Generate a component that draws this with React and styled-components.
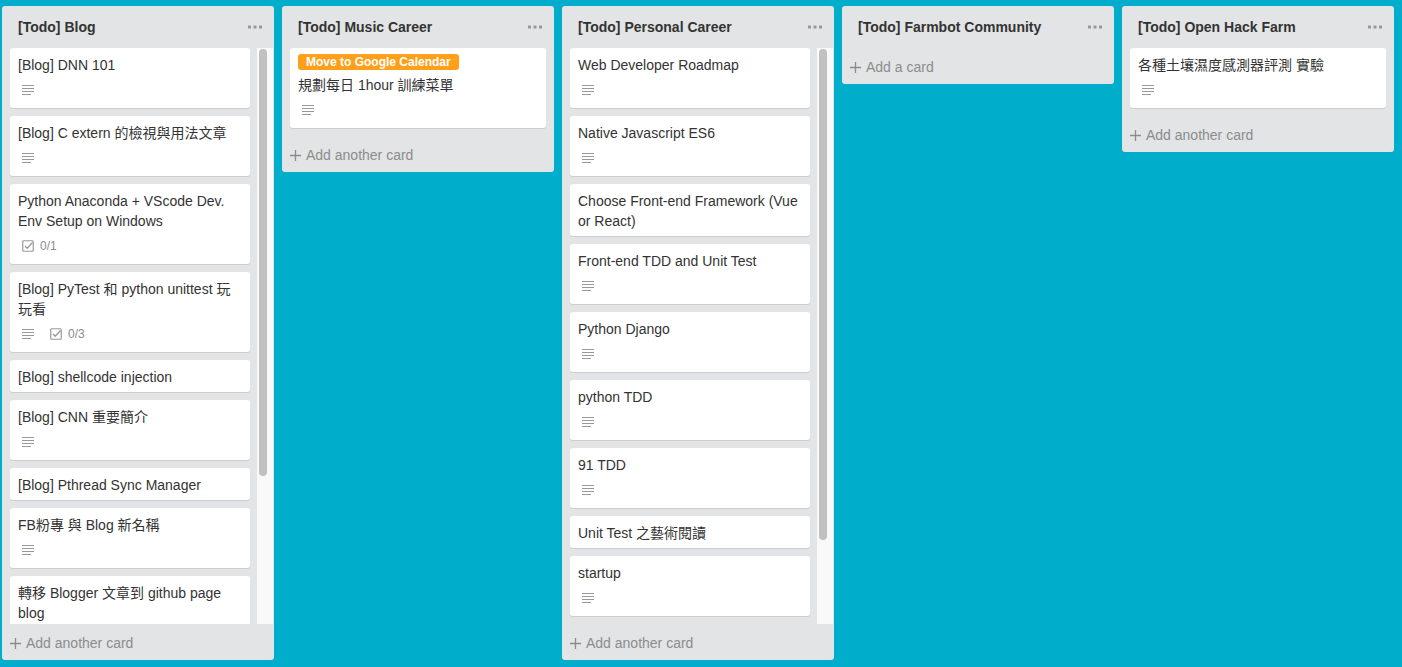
import React from 'react';
import styled, { createGlobalStyle } from 'styled-components';

const GlobalStyle = createGlobalStyle`
  html, body, #root { margin: 0; padding: 0; height: 100%; }
  body {
    background: #00aecc;
    font-family: "Liberation Sans", Arial, "Noto Sans CJK TC", sans-serif;
    font-size: 14px;
    color: #333;
    overflow: hidden;
  }
  * { box-sizing: border-box; }
`;

const Board = styled.div`
  display: flex;
  align-items: flex-start;
  gap: 8px;
  padding: 6px 0 0 2px;
  height: 667px;
`;

const List = styled.div`
  width: 272px;
  flex: 0 0 272px;
  max-height: 654px;
  background: #e2e4e6;
  border-radius: 3px;
  display: flex;
  flex-direction: column;
`;

const ListHeader = styled.div`
  height: 42px;
  flex: 0 0 42px;
  display: flex;
  align-items: center;
  justify-content: space-between;
  padding: 0 12px 0 16px;
`;

const ListTitle = styled.h2`
  margin: 0;
  font-size: 14px;
  font-weight: 700;
  line-height: 18px;
  color: #333;
`;

const MenuButton = styled.span`
  display: flex;
  align-items: center;
  height: 20px;
`;

const CardsArea = styled.div`
  flex: 1 1 auto;
  min-height: 0;
  display: flex;
`;

const Cards = styled.div`
  flex: 1 1 auto;
  min-width: 0;
  overflow: hidden;
  margin: ${p => (p.$scroll ? '0 0 0 8px' : '0 8px')};
  padding-right: ${p => (p.$scroll ? '6px' : '0')};
`;

const ScrollTrack = styled.div`
  flex: 0 0 17px;
  width: 17px;
  margin-right: 1px;
  padding: 1px 4px 0 3px;
  background: #f9f9f9;
  box-shadow: inset 1px 0 0 #e4e4e4;
`;

const ScrollThumb = styled.div`
  width: 8px;
  height: ${p => p.$size}px;
  border-radius: 4px;
  background: #c1c1c1;
`;

const Card = styled.div`
  background: #fff;
  border-radius: 3px;
  box-shadow: 0 1px 0 #ccc;
  margin-bottom: 8px;
  padding: 7px 8px 5px;
`;

const Label = styled.div`
  width: fit-content;
  height: 16px;
  line-height: 16px;
  padding: 0 8px;
  margin: -1px 0 5px;
  border-radius: 3px;
  background: #ff9f1a;
  color: #fff;
  font-size: 12px;
  font-weight: 700;
`;

const CardTitle = styled.div`
  line-height: 20px;
  font-size: 14px;
  color: #333;
  word-wrap: break-word;
`;

const Badges = styled.div`
  display: flex;
  align-items: center;
  height: 20px;
  margin: 5px 0 3px;
`;

const Badge = styled.span`
  display: inline-flex;
  align-items: center;
  gap: 6px;
  height: 20px;
  padding: 0 4px;
  margin-right: 8px;
  color: #8c8c8c;
  font-size: 12px;
`;

const Footer = styled.div`
  height: 36px;
  flex: 0 0 36px;
  display: flex;
  align-items: center;
  gap: 5px;
  padding: 2px 8px 0;
  color: #8c8c8c;
  font-size: 14px;
`;

const DescIcon = () => (
  <svg width="12" height="10" viewBox="0 0 12 10">
    <g fill="#999">
      <rect x="0" y="0" width="12" height="1" />
      <rect x="0" y="3" width="12" height="1" />
      <rect x="0" y="6" width="12" height="1" />
      <rect x="0" y="9" width="9" height="1" />
    </g>
  </svg>
);

const CheckIcon = () => (
  <svg width="12" height="12" viewBox="0 0 12 12">
    <rect x="0.75" y="0.75" width="10.5" height="10.5" rx="1" fill="none" stroke="#999" strokeWidth="1.2" />
    <path d="M3 6 L5.2 8.2 L10.5 2.5" fill="none" stroke="#999" strokeWidth="1.3" />
  </svg>
);

const PlusIcon = () => (
  <svg width="11" height="11" viewBox="0 0 11 11">
    <path d="M5.5 0 V11 M0 5.5 H11" stroke="#8c8c8c" strokeWidth="1.3" />
  </svg>
);

const DotsIcon = () => (
  <svg width="14" height="4" viewBox="0 0 14 4">
    <g fill="#999">
      <rect x="0" y="0.5" width="3" height="3" />
      <rect x="5.5" y="0.5" width="3" height="3" />
      <rect x="11" y="0.5" width="3" height="3" />
    </g>
  </svg>
);

const lists = [
  {
    title: '[Todo] Blog',
    thumb: 427,
    footer: 'Add another card',
    cards: [
      { title: '[Blog] DNN 101', desc: true },
      { title: '[Blog] C extern 的檢視與用法文章', desc: true },
      { title: 'Python Anaconda + VScode Dev. Env Setup on Windows', checklist: '0/1' },
      { title: '[Blog] PyTest 和 python unittest 玩玩看', desc: true, checklist: '0/3' },
      { title: '[Blog] shellcode injection' },
      { title: '[Blog] CNN 重要簡介', desc: true },
      { title: '[Blog] Pthread Sync Manager' },
      { title: 'FB粉專 與 Blog 新名稱', desc: true },
      { title: '轉移 Blogger 文章到 github page blog', desc: true },
    ],
  },
  {
    title: '[Todo] Music Career',
    footer: 'Add another card',
    cards: [{ label: 'Move to Google Calendar', title: '規劃每日 1hour 訓練菜單', desc: true }],
  },
  {
    title: '[Todo] Personal Career',
    thumb: 491,
    footer: 'Add another card',
    cards: [
      { title: 'Web Developer Roadmap', desc: true },
      { title: 'Native Javascript ES6', desc: true },
      { title: 'Choose Front-end Framework (Vue or React)' },
      { title: 'Front-end TDD and Unit Test', desc: true },
      { title: 'Python Django', desc: true },
      { title: 'python TDD', desc: true },
      { title: '91 TDD', desc: true },
      { title: 'Unit Test 之藝術閱讀' },
      { title: 'startup', desc: true },
    ],
  },
  { title: '[Todo] Farmbot Community', footer: 'Add a card', cards: [] },
  {
    title: '[Todo] Open Hack Farm',
    footer: 'Add another card',
    cards: [{ title: '各種土壤濕度感測器評測 實驗', desc: true }],
  },
];

export default function App() {
  return (
    <>
      <GlobalStyle />
      <Board>
        {lists.map(list => (
          <List key={list.title}>
            <ListHeader>
              <ListTitle>{list.title}</ListTitle>
              <MenuButton>
                <DotsIcon />
              </MenuButton>
            </ListHeader>
            {list.cards.length > 0 && (
              <CardsArea>
                <Cards $scroll={!!list.thumb}>
                  {list.cards.map(card => (
                    <Card key={card.title}>
                      {card.label && <Label>{card.label}</Label>}
                      <CardTitle>{card.title}</CardTitle>
                      {(card.desc || card.checklist) && (
                        <Badges>
                          {card.desc && (
                            <Badge>
                              <DescIcon />
                            </Badge>
                          )}
                          {card.checklist && (
                            <Badge>
                              <CheckIcon />
                              {card.checklist}
                            </Badge>
                          )}
                        </Badges>
                      )}
                    </Card>
                  ))}
                </Cards>
                {list.thumb && (
                  <ScrollTrack>
                    <ScrollThumb $size={list.thumb} />
                  </ScrollTrack>
                )}
              </CardsArea>
            )}
            <Footer>
              <PlusIcon />
              {list.footer}
            </Footer>
          </List>
        ))}
      </Board>
    </>
  );
}
